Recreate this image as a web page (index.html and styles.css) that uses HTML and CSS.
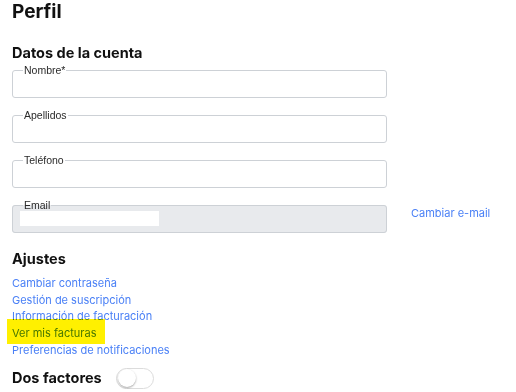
FILE: index.html
```html
<!DOCTYPE html>
<html lang="es">
<head>
  <meta charset="UTF-8" />
  <meta name="viewport" content="width=device-width, initial-scale=1" />
  <title>Perfil</title>
  <link rel="stylesheet" href="styles.css">
</head>
<body>

<h1>Perfil</h1>

<h2>Datos de la cuenta</h2>
<form class="account">
  <fieldset class="field">
    <legend>Nombre*</legend>
    <input type="text" name="nombre">
  </fieldset>
  <fieldset class="field">
    <legend>Apellidos</legend>
    <input type="text" name="apellidos">
  </fieldset>
  <fieldset class="field">
    <legend>Teléfono</legend>
    <input type="tel" name="telefono">
  </fieldset>
  <div class="email-row">
    <fieldset class="field disabled">
      <legend>Email</legend>
      <div class="masked"></div>
    </fieldset>
    <a href="#" class="change-email">Cambiar e-mail</a>
  </div>
</form>

<h2 class="settings-title">Ajustes</h2>
<ul class="settings">
  <li><a href="#">Cambiar contraseña</a></li>
  <li><a href="#">Gestión de suscripción</a></li>
  <li><a href="#">Información de facturación</a></li>
  <li class="marked"><a href="#">Ver mis facturas</a><span class="highlight"></span></li>
  <li><a href="#">Preferencias de notificaciones</a></li>
</ul>

<div class="two-factor">
  <h2>Dos factores</h2>
  <span class="toggle"><span class="knob"></span></span>
</div>

</body>
</html>
```

FILE: styles.css
```css
:root {
  --text: #111; --link: #4a80f6; --border: #cdd1d6;
  --disabled: #e8eaed; --label: #2a2a2a; --marker: #fff000;
}
body {
  margin: 0; padding: 0 12px; background: #fff; color: var(--text);
  font-family: Inter, "Noto Sans", sans-serif;
}
h1 { margin: 0; font-size: 19px; line-height: 24px; font-weight: 700; }
h2 { margin: 0; font-size: 14.5px; line-height: 18px; font-weight: 700; }
h1 + h2 { margin-top: 20px; }

.account { margin-top: 2px; width: 375px; }
.field {
  margin: 0 0 11px; padding: 0; height: 34px; box-sizing: border-box;
  border: 1px solid var(--border); border-radius: 3px;
}
.field legend {
  margin-left: 10px; padding: 0 1px; font-family: "Liberation Sans", Arial, sans-serif;
  font-size: 10.5px; line-height: 12px; color: var(--label);
}
.field input { display: block; width: 100%; height: 20px; border: none; padding: 0 10px; box-sizing: border-box; background: transparent; }
.field.disabled { background: var(--disabled); margin-bottom: 0; }
.masked { margin: 0 0 0 7px; width: 139px; height: 15px; background: #fff; }

.email-row { display: flex; align-items: flex-start; }
.email-row .field { flex: 0 0 375px; }
.change-email {
  margin: 7px 0 0 24px; white-space: nowrap; color: var(--link);
  text-decoration: none; font-size: 11px; line-height: 14px;
}

.settings-title { margin-top: 17px; }
.settings { list-style: none; margin: 7px 0 0; padding: 0; }
.settings li { font-size: 11px; line-height: 16.7px; }
.settings a { color: var(--link); text-decoration: none; }
.marked { position: relative; }
.highlight {
  position: absolute; left: -5px; top: -6px; width: 98px; height: 25px;
  background: var(--marker); mix-blend-mode: multiply;
}

.two-factor { display: flex; align-items: center; gap: 14px; margin-top: 9px; }
.toggle {
  width: 38px; height: 21px; border: 1px solid #dcdcdc; border-radius: 11px;
  display: flex; align-items: center; box-sizing: border-box; padding: 0 1px;
}
.knob {
  width: 18px; height: 18px; border-radius: 50%; background: #fff;
  box-shadow: 0 1px 2px rgba(0,0,0,.35);
}
```
